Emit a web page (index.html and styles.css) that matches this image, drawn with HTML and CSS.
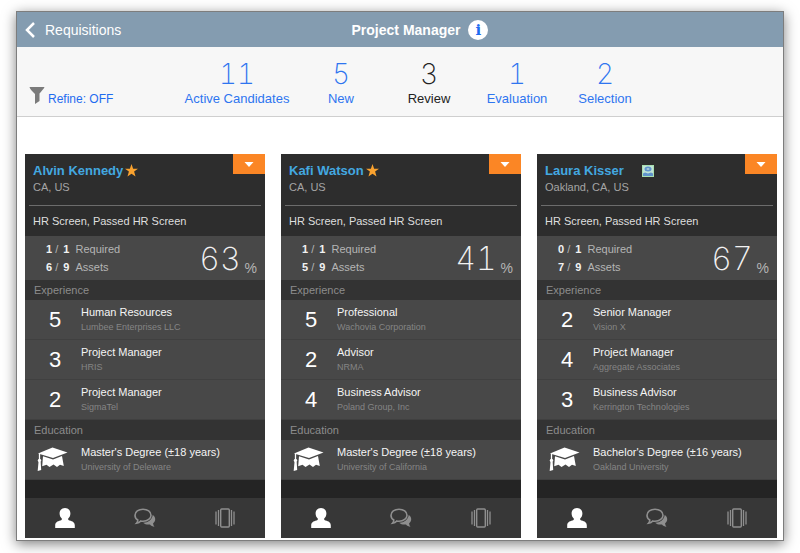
FILE: index.html
```html
<!DOCTYPE html>
<html lang="en">
<head>
  <meta charset="UTF-8" />
  <meta name="viewport" content="width=device-width, initial-scale=1.0"/>
  <title>Project Manager - Candidates</title>
  <link rel="stylesheet" href="styles.css">
</head>
<body>
  <!-- shared icons -->
  <svg class="icon-defs" width="0" height="0" aria-hidden="true">
    <symbol id="icon-star" viewBox="0 0 12 12">
      <path d="M6 0l1.500 4.300H12L8.400 7l1.300 4.600L6 8.900l-3.700 2.700L3.600 7 0 4.300h4.500z" fill="#f9a22f"/>
    </symbol>
    <symbol id="icon-caret" viewBox="0 0 10 5">
      <path d="M0.500 0h9L5 5z" fill="#fff"/>
    </symbol>
    <symbol id="icon-cap" viewBox="0 0 32 25">
      <path d="M16.500 0.500L31.500 5.500 17 11 2 6.500z" fill="#fff"/>
      <path d="M7 9.200L17 12.500l9-3.400 1.800 10-3.800-1.300-3 2.200-3.500-2.500-4 2.500-3-2.200-4.300 1.500z" fill="#fff"/>
      <path d="M3.500 6.500v9" stroke="#fff" stroke-width="1.300" fill="none"/>
      <circle cx="3.500" cy="13.500" r="1.700" fill="#fff"/>
      <path d="M2.500 15h2.200l.5 8-3.500 1z" fill="#fff"/>
    </symbol>
    <symbol id="icon-person" viewBox="0 0 20 20">
      <path d="M10 0c3.200 0 5.400 2.300 5.400 5.500 0 2.300-.9 4-2.200 5v.8c0 .6.400.9 1.300 1.100 3.200.8 5.300 1.900 5.300 5V20H.2v-2.600c0-3.100 2.100-4.200 5.300-5 .9-.2 1.300-.5 1.300-1.100v-.8c-1.300-1-2.200-2.700-2.200-5C4.600 2.300 6.800 0 10 0z" fill="#fff"/>
    </symbol>
    <symbol id="icon-chat" viewBox="0 0 22 20">
      <path d="M9 1.200c4.600 0 8 2.600 8 6s-3.400 6-8 6c-.8 0-1.500 0-2.200-.2-1 1.200-2.500 2-4.300 2.200.8-.9 1.300-2 1.300-3.200C2 10.900 1 9.200 1 7.200c0-3.400 3.400-6 8-6z" fill="none" stroke="#8f8f8f" stroke-width="1.600"/>
      <path d="M18.700 7c1.600 1 2.500 2.500 2.500 4.200 0 1.600-.8 3-2.100 4 0 1.300.5 2.500 1.400 3.600-1.900-.2-3.400-1-4.500-2.300-2.800.4-5.200-.3-6.900-1.800C13.800 14.800 18 12 18.700 7z" fill="#8f8f8f"/>
    </symbol>
    <symbol id="icon-cards" viewBox="0 0 20 20">
      <rect x="5.700" y="1" width="8.600" height="18" rx="1" fill="none" stroke="#8f8f8f" stroke-width="1.400"/>
      <path d="M3.500 2v16M16.500 2v16" stroke="#8f8f8f" stroke-width="1.300"/>
      <path d="M1 3.500v13M19 3.500v13" stroke="#8f8f8f" stroke-width="1.300"/>
    </symbol>
    <symbol id="icon-badge" viewBox="0 0 12 12">
      <rect width="12" height="12" fill="#a9dfb0"/>
      <rect x="1" y="1" width="10" height="10" fill="#bfe3d6"/>
      <ellipse cx="6" cy="4" rx="3.500" ry="2.500" fill="#5f93cc"/>
      <ellipse cx="6" cy="4" rx="1.500" ry="0.800" fill="#c5e2dc"/>
      <path d="M1 11V8.500L3 7.500l3 1 3-1 2 1V11z" fill="#5f93cc"/>
    </symbol>
  </svg>

  <div class="app">
    <header class="top-bar">
      <a href="#" class="back-link">
        <svg width="10" height="16" viewBox="0 0 10 16" aria-hidden="true"><path d="M9 1L2 8l7 7" fill="none" stroke="#fff" stroke-width="2.500"/></svg>
        Requisitions
      </a>
      <div class="page-title">
        <h1>Project Manager</h1>
        <button type="button" class="info-btn" aria-label="Info">i</button>
      </div>
    </header>

    <div class="filter-bar">
      <button type="button" class="refine-btn">
        <svg width="16" height="17" viewBox="0 0 16 17" aria-hidden="true"><path d="M0.500 0h15c-.5 1.500-1.500 2.500-5 6.500V14l-4.500 3V7C2.500 3.500 1 2 .5 0z" fill="#7b7b7b"/></svg>
        Refine: OFF
      </button>
      <nav class="stages">
        <a href="#" class="stage stage-wide"><span class="stage-count">11</span>Active Candidates</a>
        <a href="#" class="stage"><span class="stage-count">5</span>New</a>
        <a href="#" class="stage active"><span class="stage-count">3</span>Review</a>
        <a href="#" class="stage"><span class="stage-count">1</span>Evaluation</a>
        <a href="#" class="stage"><span class="stage-count">2</span>Selection</a>
      </nav>
    </div>

    <main class="card-list">
      <article class="card">
        <div class="card-head">
          <div class="person">
            <h2><a href="#">Alvin Kennedy</a> <svg class="star"><use href="#icon-star"/></svg></h2>
            <p>CA, US</p>
          </div>
          <button type="button" class="menu-btn" aria-label="Options"><svg width="10" height="5"><use href="#icon-caret"/></svg></button>
        </div>
        <p class="status">HR Screen, Passed HR Screen</p>
        <div class="score">
          <ul>
            <li><b>1</b> / <b>1</b> <span>Required</span></li>
            <li><b>6</b> / <b>9</b> <span>Assets</span></li>
          </ul>
          <p class="percent">63 <small>%</small></p>
        </div>
        <h3>Experience</h3>
        <ul class="rows">
          <li><span class="years">5</span><div><h4>Human Resources</h4><p>Lumbee Enterprises LLC</p></div></li>
          <li><span class="years">3</span><div><h4>Project Manager</h4><p>HRIS</p></div></li>
          <li><span class="years">2</span><div><h4>Project Manager</h4><p>SigmaTel</p></div></li>
        </ul>
        <h3>Education</h3>
        <ul class="rows">
          <li><svg class="cap"><use href="#icon-cap"/></svg><div><h4>Master's Degree (±18 years)</h4><p>University of Deleware</p></div></li>
        </ul>
        <div class="tabs">
          <button type="button" aria-label="Profile"><svg width="20" height="20"><use href="#icon-person"/></svg></button>
          <button type="button" aria-label="Comments"><svg width="22" height="20"><use href="#icon-chat"/></svg></button>
          <button type="button" aria-label="Cards"><svg width="20" height="20"><use href="#icon-cards"/></svg></button>
        </div>
      </article>

      <article class="card">
        <div class="card-head">
          <div class="person">
            <h2><a href="#">Kafi Watson</a> <svg class="star"><use href="#icon-star"/></svg></h2>
            <p>CA, US</p>
          </div>
          <button type="button" class="menu-btn" aria-label="Options"><svg width="10" height="5"><use href="#icon-caret"/></svg></button>
        </div>
        <p class="status">HR Screen, Passed HR Screen</p>
        <div class="score">
          <ul>
            <li><b>1</b> / <b>1</b> <span>Required</span></li>
            <li><b>5</b> / <b>9</b> <span>Assets</span></li>
          </ul>
          <p class="percent">41 <small>%</small></p>
        </div>
        <h3>Experience</h3>
        <ul class="rows">
          <li><span class="years">5</span><div><h4>Professional</h4><p>Wachovia Corporation</p></div></li>
          <li><span class="years">2</span><div><h4>Advisor</h4><p>NRMA</p></div></li>
          <li><span class="years">4</span><div><h4>Business Advisor</h4><p>Poland Group, Inc</p></div></li>
        </ul>
        <h3>Education</h3>
        <ul class="rows">
          <li><svg class="cap"><use href="#icon-cap"/></svg><div><h4>Master's Degree (±18 years)</h4><p>University of California</p></div></li>
        </ul>
        <div class="tabs">
          <button type="button" aria-label="Profile"><svg width="20" height="20"><use href="#icon-person"/></svg></button>
          <button type="button" aria-label="Comments"><svg width="22" height="20"><use href="#icon-chat"/></svg></button>
          <button type="button" aria-label="Cards"><svg width="20" height="20"><use href="#icon-cards"/></svg></button>
        </div>
      </article>

      <article class="card">
        <div class="card-head">
          <div class="person">
            <h2><a href="#">Laura Kisser</a> <svg class="badge"><use href="#icon-badge"/></svg></h2>
            <p>Oakland, CA, US</p>
          </div>
          <button type="button" class="menu-btn" aria-label="Options"><svg width="10" height="5"><use href="#icon-caret"/></svg></button>
        </div>
        <p class="status">HR Screen, Passed HR Screen</p>
        <div class="score">
          <ul>
            <li><b>0</b> / <b>1</b> <span>Required</span></li>
            <li><b>7</b> / <b>9</b> <span>Assets</span></li>
          </ul>
          <p class="percent">67 <small>%</small></p>
        </div>
        <h3>Experience</h3>
        <ul class="rows">
          <li><span class="years">2</span><div><h4>Senior Manager</h4><p>Vision X</p></div></li>
          <li><span class="years">4</span><div><h4>Project Manager</h4><p>Aggregate Associates</p></div></li>
          <li><span class="years">3</span><div><h4>Business Advisor</h4><p>Kerrington Technologies</p></div></li>
        </ul>
        <h3>Education</h3>
        <ul class="rows">
          <li><svg class="cap"><use href="#icon-cap"/></svg><div><h4>Bachelor's Degree (±16 years)</h4><p>Oakland University</p></div></li>
        </ul>
        <div class="tabs">
          <button type="button" aria-label="Profile"><svg width="20" height="20"><use href="#icon-person"/></svg></button>
          <button type="button" aria-label="Comments"><svg width="22" height="20"><use href="#icon-chat"/></svg></button>
          <button type="button" aria-label="Cards"><svg width="20" height="20"><use href="#icon-cards"/></svg></button>
        </div>
      </article>
    </main>
  </div>
</body>
</html>
```

FILE: styles.css
```css
* {
  box-sizing: border-box;
  margin: 0;
  padding: 0;
}

body {
  font-family: "Liberation Sans", Arial, sans-serif;
  font-size: 11px;
  background: #fff;
  padding: 11px 16px 12px;
}

ul {
  list-style: none;
}

a {
  text-decoration: none;
}

button {
  font-family: inherit;
  border: none;
  background: none;
  cursor: pointer;
}

svg {
  display: block;
}

.icon-defs {
  position: absolute;
}

.app {
  background: #fff;
  border: 1px solid #7d7d7d;
  box-shadow: 0 3px 12px rgba(0, 0, 0, 0.5);
}

/* top bar */
.top-bar {
  display: grid;
  grid-template-columns: 1fr auto 1fr;
  align-items: center;
  height: 35px;
  padding: 0 8px;
  background: #849cb0;
}

.back-link {
  display: flex;
  align-items: center;
  gap: 10px;
  color: #fff;
  font-size: 14px;
}

.page-title {
  display: flex;
  align-items: center;
  gap: 8px;
  padding-left: 40px;
}

.page-title h1 {
  color: #fff;
  font-size: 14px;
}

.info-btn {
  width: 20px;
  height: 20px;
  border-radius: 50%;
  background: #fff;
  color: #1f6cf0;
  font-family: "DejaVu Serif", serif;
  font-size: 15px;
  font-weight: bold;
  line-height: 20px;
}

/* stage filter */
.filter-bar {
  display: flex;
  align-items: flex-end;
  height: 70px;
  padding: 0 12px 9px;
  background: #f7f7f7;
  border-bottom: 1px solid #cfcfcf;
}

.refine-btn {
  display: flex;
  align-items: flex-end;
  gap: 3px;
  width: 148px;
  color: #1f6cf0;
  font-size: 12px;
  line-height: 16px;
}

.refine-btn svg {
  margin-bottom: 3px;
}

.stages {
  display: flex;
}

.stage {
  width: 88px;
  color: #2e75f0;
  font-size: 13px;
  line-height: 16px;
  text-align: center;
}

.stage-wide {
  width: 120px;
}

.stage.active {
  color: #222;
}

.stage-count {
  display: block;
  font-family: Inter, sans-serif;
  font-size: 28px;
  font-variant-numeric: tabular-nums;
  font-weight: 200;
  line-height: 34px;
}

/* candidate cards */
.card-list {
  display: grid;
  grid-template-columns: repeat(3, 1fr);
  gap: 16px;
  padding: 37px 6px 2px 8px;
}

.card {
  background: #242424;
}

.card-head {
  display: flex;
  justify-content: space-between;
  align-items: flex-start;
  height: 51px;
  background: #2d2d2d;
}

.person {
  padding: 8px 0 0 8px;
}

.person h2 {
  display: flex;
  align-items: center;
  font-size: 13px;
  line-height: 17px;
}

.person h2 a {
  color: #43a8e0;
}

.person p {
  color: #a5a5a5;
  line-height: 17px;
}

.star {
  width: 13px;
  height: 13px;
  margin-left: 2px;
}

.badge {
  width: 12px;
  height: 12px;
  margin-left: 18px;
}

.menu-btn {
  display: flex;
  align-items: center;
  justify-content: center;
  width: 32px;
  height: 20px;
  background: #fb8625;
}

.status {
  height: 31px;
  color: #dedede;
  line-height: 32px;
  padding: 0 8px;
  /* divider stops 4px short of the card edges */
  background: linear-gradient(#6c6c6c, #6c6c6c) center top / calc(100% - 8px) 1px no-repeat #2d2d2d;
}

.score {
  display: flex;
  justify-content: space-between;
  height: 44px;
  padding: 4px 8px 4px 21px;
  background: #484848;
}

.score li {
  color: #b5b5b5;
  line-height: 18px;
}

.score b {
  color: #f2f2f2;
}

.score li b:last-of-type {
  margin-left: 2px;
}

.score li span {
  margin-left: 3px;
}

.percent {
  display: flex;
  gap: 4px;
  color: #f2f2f2;
  font-family: Inter, sans-serif;
  font-size: 32px;
  font-variant-numeric: tabular-nums;
  font-weight: 200;
  line-height: 38px;
}

.percent small {
  align-self: flex-end;
  color: #b5b5b5;
  font-family: "Liberation Sans", Arial, sans-serif;
  font-size: 14px;
  line-height: 16px;
}

.card h3 {
  height: 20px;
  padding-left: 9px;
  background: #333;
  color: #8c8c8c;
  font-size: 11px;
  font-weight: normal;
  line-height: 20px;
}

.rows li {
  display: flex;
  align-items: center;
  height: 40px;
  background: #484848;
  border-bottom: 1px solid #404040;
}

.years {
  width: 56px;
  padding-left: 4px;
  color: #fff;
  font-size: 22px;
  text-align: center;
}

.cap {
  width: 32px;
  height: 25px;
  margin: 0 13px 0 11px;
}

.rows h4 {
  color: #f5f5f5;
  font-size: 11px;
  font-weight: normal;
  line-height: 15px;
}

.rows p {
  color: #858585;
  font-size: 9px;
  line-height: 15px;
}

.tabs {
  display: grid;
  grid-template-columns: repeat(3, 1fr);
  height: 40px;
  margin-top: 18px;
  background: #373737;
}

.tabs button {
  display: flex;
  align-items: center;
  justify-content: center;
}
```
